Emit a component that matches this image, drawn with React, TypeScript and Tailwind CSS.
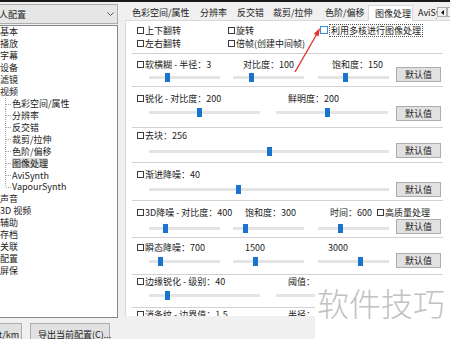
import React from "react";

type Label = { t: string; w?: number; cb?: boolean };
type Track = { w: number; thumb: number };
type Section = {
  h: string;
  hm: string;
  sm: string;
  bm?: string;
  labels: Label[];
  tracks: Track[];
  gaps: string[];
};

const TREE: { t: string; child?: boolean; last?: boolean; sel?: boolean }[] = [
  { t: "基本" },
  { t: "播放" },
  { t: "字幕" },
  { t: "设备" },
  { t: "滤镜" },
  { t: "视频" },
  { t: "色彩空间/属性", child: true },
  { t: "分辨率", child: true },
  { t: "反交错", child: true },
  { t: "裁剪/拉伸", child: true },
  { t: "色阶/偏移", child: true },
  { t: "图像处理", child: true, sel: true },
  { t: "AviSynth", child: true },
  { t: "VapourSynth", child: true, last: true },
  { t: "声音" },
  { t: "3D 视频" },
  { t: "辅助" },
  { t: "存档" },
  { t: "关联" },
  { t: "配置" },
  { t: "屏保" },
];

const TABS = [
  { t: "色彩空间/属性", cls: "w-[69px] pl-[7px]" },
  { t: "分辨率", cls: "w-[37px] pl-[6px]" },
  { t: "反交错", cls: "w-[37px] pl-[6px]" },
  { t: "裁剪/拉伸", cls: "w-[51px] pl-[5px]" },
  { t: "色阶/偏移", cls: "w-[49px] pl-[6px]" },
];

const SECTIONS: Section[] = [
  {
    h: "h-[33px]", hm: "mt-[4px]", sm: "mt-[2px]", bm: "mt-[13px]",
    labels: [{ t: "软横糊 - 半径：3", w: 106, cb: true }, { t: "对比度：100", w: 89 }, { t: "饱和度：150" }],
    tracks: [{ w: 71, thumb: 16 }, { w: 71, thumb: 16 }, { w: 71, thumb: 25 }],
    gaps: ["ml-[13px]", "ml-[14px]"],
  },
  {
    h: "h-[41px]", hm: "mt-[5px]", sm: "mt-[3px]", bm: "mt-[19px]",
    labels: [{ t: "锐化 - 对比度：200", w: 151, cb: true }, { t: "鲜明度：200" }],
    tracks: [{ w: 111, thumb: 48 }, { w: 112, thumb: 49 }],
    gaps: ["ml-[16px]"],
  },
  {
    h: "h-[35px]", hm: "mt-[1px]", sm: "mt-[5px]", bm: "mt-[15px]",
    labels: [{ t: "去块：256", cb: true }],
    tracks: [{ w: 240, thumb: 118 }],
    gaps: [],
  },
  {
    h: "h-[38px]", hm: "mt-[5px]", sm: "mt-[4px]", bm: "mt-[19px]",
    labels: [{ t: "渐进降噪：40", cb: true }],
    tracks: [{ w: 240, thumb: 87 }],
    gaps: [],
  },
  {
    h: "h-[37px]", hm: "mt-[5px]", sm: "mt-[5px]", bm: "mt-[18px]",
    labels: [
      { t: "3D降噪 - 对比度：400", w: 108, cb: true },
      { t: "饱和度：300", w: 85 },
      { t: "时间：600", w: 47 },
      { t: "高质量处理", cb: true },
    ],
    tracks: [{ w: 71, thumb: 14 }, { w: 71, thumb: 10 }, { w: 71, thumb: 20 }],
    gaps: ["ml-[13px]", "ml-[14px]"],
  },
  {
    h: "h-[37px]", hm: "mt-[3px]", sm: "mt-[3px]", bm: "mt-[15px]",
    labels: [{ t: "瞬态降噪：700", w: 108, cb: true }, { t: "1500", w: 83 }, { t: "3000" }],
    tracks: [{ w: 71, thumb: 9 }, { w: 71, thumb: 20 }, { w: 71, thumb: 40 }],
    gaps: ["ml-[13px]", "ml-[14px]"],
  },
  {
    h: "h-[33px]", hm: "mt-0", sm: "mt-[3px]",
    labels: [{ t: "边缘锐化 - 级别：40", w: 151, cb: true }, { t: "阈值：1" }],
    tracks: [{ w: 111, thumb: 16 }, { w: 112, thumb: 80 }],
    gaps: ["ml-[16px]"],
  },
  {
    h: "h-[30px]", hm: "mt-0", sm: "mt-[3px]",
    labels: [{ t: "消条纹 - 边界值：1.5", w: 151, cb: true }, { t: "半径：1" }],
    tracks: [{ w: 111, thumb: 30 }, { w: 112, thumb: 40 }],
    gaps: ["ml-[16px]"],
  },
];

function Check({ focus }: { focus?: boolean }) {
  return (
    <span
      className={
        focus
          ? "inline-block w-[8px] h-[8px] border border-[#3d8ee0] bg-white mr-[1px] shrink-0"
          : "inline-block w-[7px] h-[7px] border border-[#3a3a3a] bg-white mr-[1px] shrink-0"
      }
    />
  );
}

function Slider({ w, thumb }: Track) {
  return (
    <div className="relative h-[10px] shrink-0" style={{ width: w }}>
      <div className="absolute left-0 right-0 top-[4px] h-[3px] bg-[#e4e4e4]" />
      <div className="absolute top-[1px] w-[5px] h-[9px] bg-[#1a73cc]" style={{ left: thumb }} />
    </div>
  );
}

function DefaultBtn() {
  return (
    <div className="w-[45px] h-[15px] border border-[#adadad] bg-[#e1e1e1] flex items-center justify-center text-[9px] leading-none">
      默认值
    </div>
  );
}

function TreeConnector({ last }: { last?: boolean }) {
  return (
    <svg width="12" height="12" className="shrink-0">
      <line x1="5.5" y1="0" x2="5.5" y2={last ? 6 : 12} stroke="#a0a0a0" strokeDasharray="1 1" />
      <line x1="6" y1="6.5" x2="11" y2="6.5" stroke="#a0a0a0" strokeDasharray="1 1" />
    </svg>
  );
}

export default function App() {
  return (
    <div className="relative w-[450px] h-[339px] overflow-hidden bg-[#f0f0f0] text-[#222] font-['Noto_Sans_CJK_SC',sans-serif] text-[9px] leading-none">
      <div className="h-[2px] bg-[#1a1a1a]" />

      <div className="flex h-[316px]">
        {/* left: profile dropdown + tree */}
        <div className="w-[118px] shrink-0">
          <div className="mt-[2px] h-[20px] border border-[#acacac] border-l-0 bg-[#e6e6e6] flex items-center justify-between pr-[3px]">
            <span className="-ml-[1px]">人配置</span>
            <svg width="7" height="5">
              <polyline points="0.5,0.5 3.5,3.5 6.5,0.5" fill="none" stroke="#555" strokeWidth="1" />
            </svg>
          </div>
          <div className="mt-[1px] h-[293px] bg-white border-t border-r border-b border-[#828790] overflow-hidden">
            {TREE.map((it) => (
              <div key={it.t} className="h-[11.93px] flex items-center whitespace-nowrap">
                {it.child && <TreeConnector last={it.last} />}
                <span className={it.sel ? "bg-[#d9d9d9] h-[10px] flex items-center" : ""}>{it.t}</span>
              </div>
            ))}
          </div>
        </div>

        {/* right: tabs + page */}
        <div className="ml-[7px] w-[325px] shrink-0 flex flex-col">
          <div className="h-[18px] flex items-end whitespace-nowrap">
            {TABS.map((tab) => (
              <div key={tab.t} className={`${tab.cls} h-[15px] flex items-center shrink-0`}>
                {tab.t}
              </div>
            ))}
            <div className="relative z-10 w-[45px] h-[16px] -mb-[1px] bg-white border border-b-0 border-[#d9d9d9] pl-[6px] flex items-center shrink-0">
              图像处理
            </div>
            <div className="w-[24px] h-[15px] pl-[5px] flex items-center overflow-hidden shrink-0">AviSynth</div>
            <div className="self-start mt-[5px] w-[10px] h-[10px] border border-[#adadad] bg-[#f0f0f0] flex items-center justify-center shrink-0">
              <svg width="3" height="5">
                <polygon points="3,0 0,2.5 3,5" fill="#111" />
              </svg>
            </div>
            <div className="self-start mt-[5px] w-[4px] h-[10px] border border-r-0 border-[#adadad] bg-[#f0f0f0] shrink-0" />
          </div>

          <div className="h-[296px] bg-white border-t border-l border-[#d9d9d9] overflow-hidden">
            <div className="ml-[6px] w-[311px]">
              {/* flips / options */}
              <div className="h-[33px] pt-[3px] pl-[5px] border-b border-[#d2d2d2] whitespace-nowrap">
                <div className="h-[13px] flex items-center">
                  <div className="w-[91px] flex items-center"><Check />上下翻转</div>
                  <div className="w-[92px] flex items-center"><Check />旋转</div>
                  <div className="flex items-center -mt-[1px]">
                    <Check focus />
                    <span className="border border-dotted border-[#555] px-[1px] py-[1px]">利用多核进行图像处理</span>
                  </div>
                </div>
                <div className="h-[13px] flex items-center">
                  <div className="w-[91px] flex items-center"><Check />左右翻转</div>
                  <div className="flex items-center"><Check />倍帧(创建中间帧)</div>
                </div>
              </div>

              {SECTIONS.map((s, i) => (
                <div key={i} className={`${s.h} flex border-b border-[#d2d2d2] shrink-0`}>
                  <div className="w-[264px] shrink-0">
                    <div className={`${s.hm} h-[12px] pl-[5px] flex items-center whitespace-nowrap`}>
                      {s.labels.map((l) => (
                        <div key={l.t} className="flex items-center shrink-0" style={l.w ? { width: l.w } : undefined}>
                          {l.cb && <Check />}
                          <span>{l.t}</span>
                        </div>
                      ))}
                    </div>
                    <div className={`${s.sm} pl-[17px] flex`}>
                      {s.tracks.map((tr, j) => (
                        <div key={j} className={j > 0 ? s.gaps[j - 1] : ""}>
                          <Slider w={tr.w} thumb={tr.thumb} />
                        </div>
                      ))}
                    </div>
                  </div>
                  {s.bm && (
                    <div className={s.bm}>
                      <DefaultBtn />
                    </div>
                  )}
                </div>
              ))}
            </div>
          </div>
        </div>
      </div>

      {/* bottom buttons */}
      <div className="h-[21px] flex items-start pt-[5px] whitespace-nowrap">
        <div className="w-[22px] h-[20px] border border-l-0 border-[#adadad] bg-[#e1e1e1] flex items-start justify-end pr-[2px] pt-[6px] overflow-hidden">
          t/km
        </div>
        <div className="ml-[8px] w-[80px] h-[20px] border border-[#adadad] bg-[#e1e1e1] pl-[7px] pt-[6px]">
          导出当前配置(C)...
        </div>
      </div>

      {/* red annotation arrow */}
      <svg className="absolute left-0 top-0 pointer-events-none" width="450" height="339">
        <line x1="295" y1="72" x2="316.3" y2="35" stroke="#e2342b" strokeWidth="1.4" />
        <polygon points="320,28 318.6,36.4 313.8,33.8" fill="#e2342b" />
      </svg>

      {/* watermark */}
      <div className="absolute left-[315px] top-[278px] w-[135px] h-[61px] bg-white pt-[8px] pl-[2px]">
        <span className="text-[32px] leading-none font-light text-[#c2c2c2] whitespace-nowrap">软件技巧</span>
      </div>
    </div>
  );
}
